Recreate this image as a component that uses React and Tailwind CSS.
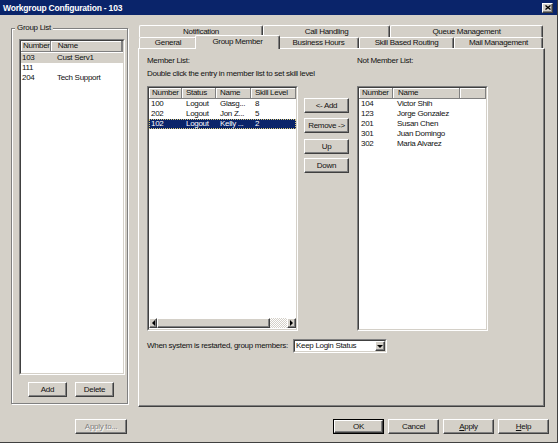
import React from "react";

const raised =
  "border border-t-white border-l-white border-r-[#404040] border-b-[#404040] shadow-[inset_-1px_-1px_0_#808080] bg-[#d4d0c8]";

function Btn({ className = "", children, disabled }) {
  return (
    <div className={`flex items-center justify-center whitespace-nowrap ${raised} ${className}`}>
      <span className={disabled ? "text-[#808080] [text-shadow:1px_1px_0_#fff]" : ""}>{children}</span>
    </div>
  );
}

function Sunken({ className = "", children, white = true }) {
  return (
    <div className={`border border-t-[#808080] border-l-[#808080] border-r-white border-b-white ${className}`}>
      <div
        className={`h-full border border-t-[#404040] border-l-[#404040] border-r-[#d4d0c8] border-b-[#d4d0c8] overflow-hidden flex flex-col ${
          white ? "bg-white" : ""
        }`}
      >
        {children}
      </div>
    </div>
  );
}

function HCell({ className = "", children }) {
  return (
    <div
      className={`h-full flex items-center bg-[#d4d0c8] border-r border-b border-[#808080] shadow-[inset_1px_1px_0_#fff] whitespace-nowrap overflow-hidden ${className}`}
    >
      {children}
    </div>
  );
}

function Tri({ dir }) {
  const pts = {
    left: "3,0 0,3 3,6",
    right: "0,0 3,3 0,6",
    down: "0,0 6,0 3,3",
  }[dir];
  const w = dir === "down" ? 6 : 3;
  const h = dir === "down" ? 3 : 6;
  return (
    <svg width={w} height={h} viewBox={`0 0 ${w} ${h}`}>
      <polygon points={pts} fill="#000" />
    </svg>
  );
}

function Tab({ className = "", children }) {
  return (
    <div
      className={`flex items-center justify-center whitespace-nowrap border-t border-l border-white border-r border-r-[#404040] shadow-[inset_-1px_0_0_#808080] rounded-t-[2px] bg-[#d4d0c8] ${className}`}
    >
      {children}
    </div>
  );
}

const members = [
  ["100", "Logout", "Glasg...", "8"],
  ["202", "Logout", "Jon Z...", "5"],
  ["102", "Logout", "Kelly ...", "2"],
];

const notMembers = [
  ["104", "Victor Shih"],
  ["123", "Jorge Gonzalez"],
  ["201", "Susan Chen"],
  ["301", "Juan Domingo"],
  ["302", "Maria Alvarez"],
];

export default function App() {
  return (
    <div className="w-[558px] h-[443px] bg-[#d4d0c8] border-r border-b border-r-[#404040] border-b-[#404040] font-['Liberation_Sans',Arial,sans-serif] text-[8px] leading-[10px] tracking-[-0.3px] text-[#111] overflow-hidden flex flex-col">
      {/* Title bar */}
      <div className="h-[15px] shrink-0 bg-[#0a246a] flex items-center justify-between pl-[3px] pr-[4px]">
        <span className="text-white font-bold text-[8.5px] tracking-[-0.2px]">Workgroup Configuration - 103</span>
        <div className={`w-[11px] h-[10px] flex items-center justify-center ${raised}`}>
          <svg width="6" height="5" viewBox="0 0 6 5">
            <path d="M0.5 0.5 L5.5 4.5 M5.5 0.5 L0.5 4.5" stroke="#000" strokeWidth="1.3" />
          </svg>
        </div>
      </div>

      {/* Body */}
      <div className="flex h-[392px] shrink-0">
        {/* Group List */}
        <div className="relative ml-[11px] mt-[13px] w-[117px] h-[376px] border border-[#808080] shadow-[inset_1px_1px_0_#fff,1px_1px_0_#fff] flex flex-col">
          <span className="absolute left-[3px] -top-[6px] px-[2px] bg-[#d4d0c8]">Group List</span>
          <Sunken className="mt-[10px] ml-[7px] w-[106px] h-[336px]">
            <div className="h-[11px] flex shrink-0">
              <HCell className="w-[30px] pl-[2px]">Number</HCell>
              <HCell className="w-[72px] pl-[7px]">Name</HCell>
              <HCell className="flex-1" />
            </div>
            <div className="flex bg-[#d4d0c8] h-[10px] mt-[1px]">
              <span className="w-[30px] pl-[1px]">103</span>
              <span className="pl-[6px]">Cust Serv1</span>
            </div>
            <div className="flex h-[10px]">
              <span className="w-[30px] pl-[1px]">111</span>
            </div>
            <div className="flex h-[10px]">
              <span className="w-[30px] pl-[1px]">204</span>
              <span className="pl-[6px]">Tech Support</span>
            </div>
          </Sunken>
          <div className="flex gap-[8px] ml-[16px] mt-[7px]">
            <Btn className="w-[39px] h-[15px]">Add</Btn>
            <Btn className="w-[39px] h-[15px]">Delete</Btn>
          </div>
        </div>

        {/* Tab control */}
        <div className="ml-[10px] mt-[10px] w-[407px] flex flex-col">
          <div className="flex h-[12px] pl-[1px]">
            <Tab className="w-[124px] h-[12px]">Notification</Tab>
            <Tab className="w-[127px] h-[12px]">Call Handling</Tab>
            <Tab className="w-[153px] h-[12px]">Queue Management</Tab>
          </div>
          <div className="flex h-[11px] pl-[1px] items-end">
            <Tab className="w-[58px] h-[11px]">General</Tab>
            <div className="relative z-10 -mx-[2px] -mb-[1px] w-[85px] h-[14px] flex items-center justify-center whitespace-nowrap border-t border-l border-white border-r border-r-[#404040] shadow-[inset_-1px_0_0_#808080] rounded-t-[2px] bg-[#d4d0c8] pb-[2px]">
              Group Member
            </div>
            <Tab className="w-[81px] h-[11px]">Business Hours</Tab>
            <Tab className="w-[95px] h-[11px]">Skill Based Routing</Tab>
            <Tab className="w-[89px] h-[11px]">Mail Management</Tab>
          </div>
          <div className="h-[359px] border-t border-l border-white border-r border-b border-r-[#404040] border-b-[#404040] shadow-[inset_-1px_-1px_0_#808080] pl-[8px] pt-[7px] flex flex-col">
            <div className="flex h-[10px]">
              <span className="w-[210px]">Member List:</span>
              <span>Not Member List:</span>
            </div>
            <div className="mt-[3px] h-[10px] whitespace-nowrap">
              Double click the entry in member list to set skill level
            </div>
            <div className="flex mt-[7px]">
              <Sunken className="w-[151px] h-[245px]">
                <div className="h-[11px] flex shrink-0">
                  <HCell className="w-[33px] pl-[3px]">Number</HCell>
                  <HCell className="w-[34px] pl-[4px]">Status</HCell>
                  <HCell className="w-[35px] pl-[4px]">Name</HCell>
                  <HCell className="flex-1 pl-[4px]">Skill Level</HCell>
                </div>
                <div className="flex-1 flex flex-col">
                  {members.map((m, i) => (
                    <div
                      key={m[0]}
                      className={`flex h-[10px] whitespace-nowrap ${
                        i === 2
                          ? "bg-[#0a246a] text-white outline outline-1 outline-dotted outline-[#d8c878] -outline-offset-1"
                          : ""
                      }`}
                    >
                      <span className="w-[33px] pl-[2px]">{m[0]}</span>
                      <span className="w-[34px] pl-[4px]">{m[1]}</span>
                      <span className="w-[35px] pl-[4px]">{m[2]}</span>
                      <span className="pl-[4px]">{m[3]}</span>
                    </div>
                  ))}
                </div>
                <div className="h-[10px] flex shrink-0 mb-[1px]">
                  <div className={`w-[8px] flex items-center justify-center ${raised}`}>
                    <Tri dir="left" />
                  </div>
                  <div className={`w-[113px] ${raised}`} />
                  <div className="flex-1 bg-[repeating-conic-gradient(#d4d0c8_0_25%,#fff_0_50%)] bg-[length:2px_2px]" />
                  <div className={`w-[9px] flex items-center justify-center ${raised}`}>
                    <Tri dir="right" />
                  </div>
                </div>
              </Sunken>

              <div className="ml-[6px] w-[45px] pt-[12px] flex flex-col">
                <Btn className="h-[15px]">{"<- Add"}</Btn>
                <Btn className="h-[15px] mt-[5px]">{"Remove ->"}</Btn>
                <Btn className="h-[15px] mt-[6px]">Up</Btn>
                <Btn className="h-[15px] mt-[4px]">Down</Btn>
              </div>

              <Sunken className="ml-[8px] w-[131px] h-[245px]">
                <div className="h-[11px] flex shrink-0">
                  <HCell className="w-[34px] pl-[3px]">Number</HCell>
                  <HCell className="w-[67px] pl-[5px]">Name</HCell>
                  <HCell className="flex-1" />
                </div>
                {notMembers.map((m) => (
                  <div key={m[0]} className="flex h-[10px] whitespace-nowrap">
                    <span className="w-[34px] pl-[2px]">{m[0]}</span>
                    <span className="pl-[4px]">{m[1]}</span>
                  </div>
                ))}
              </Sunken>
            </div>

            <div className="flex items-center mt-[8px] h-[14px]">
              <span className="w-[146px] whitespace-nowrap">When system is restarted, group members:</span>
              <Sunken className="w-[94px] h-[14px]">
                <div className="flex h-full">
                  <span className="flex-1 pl-[1px] leading-[10px]">Keep Login Status</span>
                  <div className={`w-[10px] flex items-center justify-center ${raised}`}>
                    <Tri dir="down" />
                  </div>
                </div>
              </Sunken>
            </div>
          </div>
        </div>
      </div>

      {/* Bottom buttons */}
      <div className="flex mt-[12px] h-[15px] shrink-0">
        <Btn className="ml-[75px] w-[52px] h-[15px]" disabled>
          Apply to...
        </Btn>
        <div className="ml-[206px] w-[51px] h-[15px] border border-black flex">
          <Btn className="flex-1">OK</Btn>
        </div>
        <Btn className="ml-[4px] w-[51px] h-[15px]">Cancel</Btn>
        <Btn className="ml-[4px] w-[51px] h-[15px]">
          <u>A</u>pply
        </Btn>
        <Btn className="ml-[4px] w-[51px] h-[15px]">
          <u>H</u>elp
        </Btn>
      </div>
    </div>
  );
}
